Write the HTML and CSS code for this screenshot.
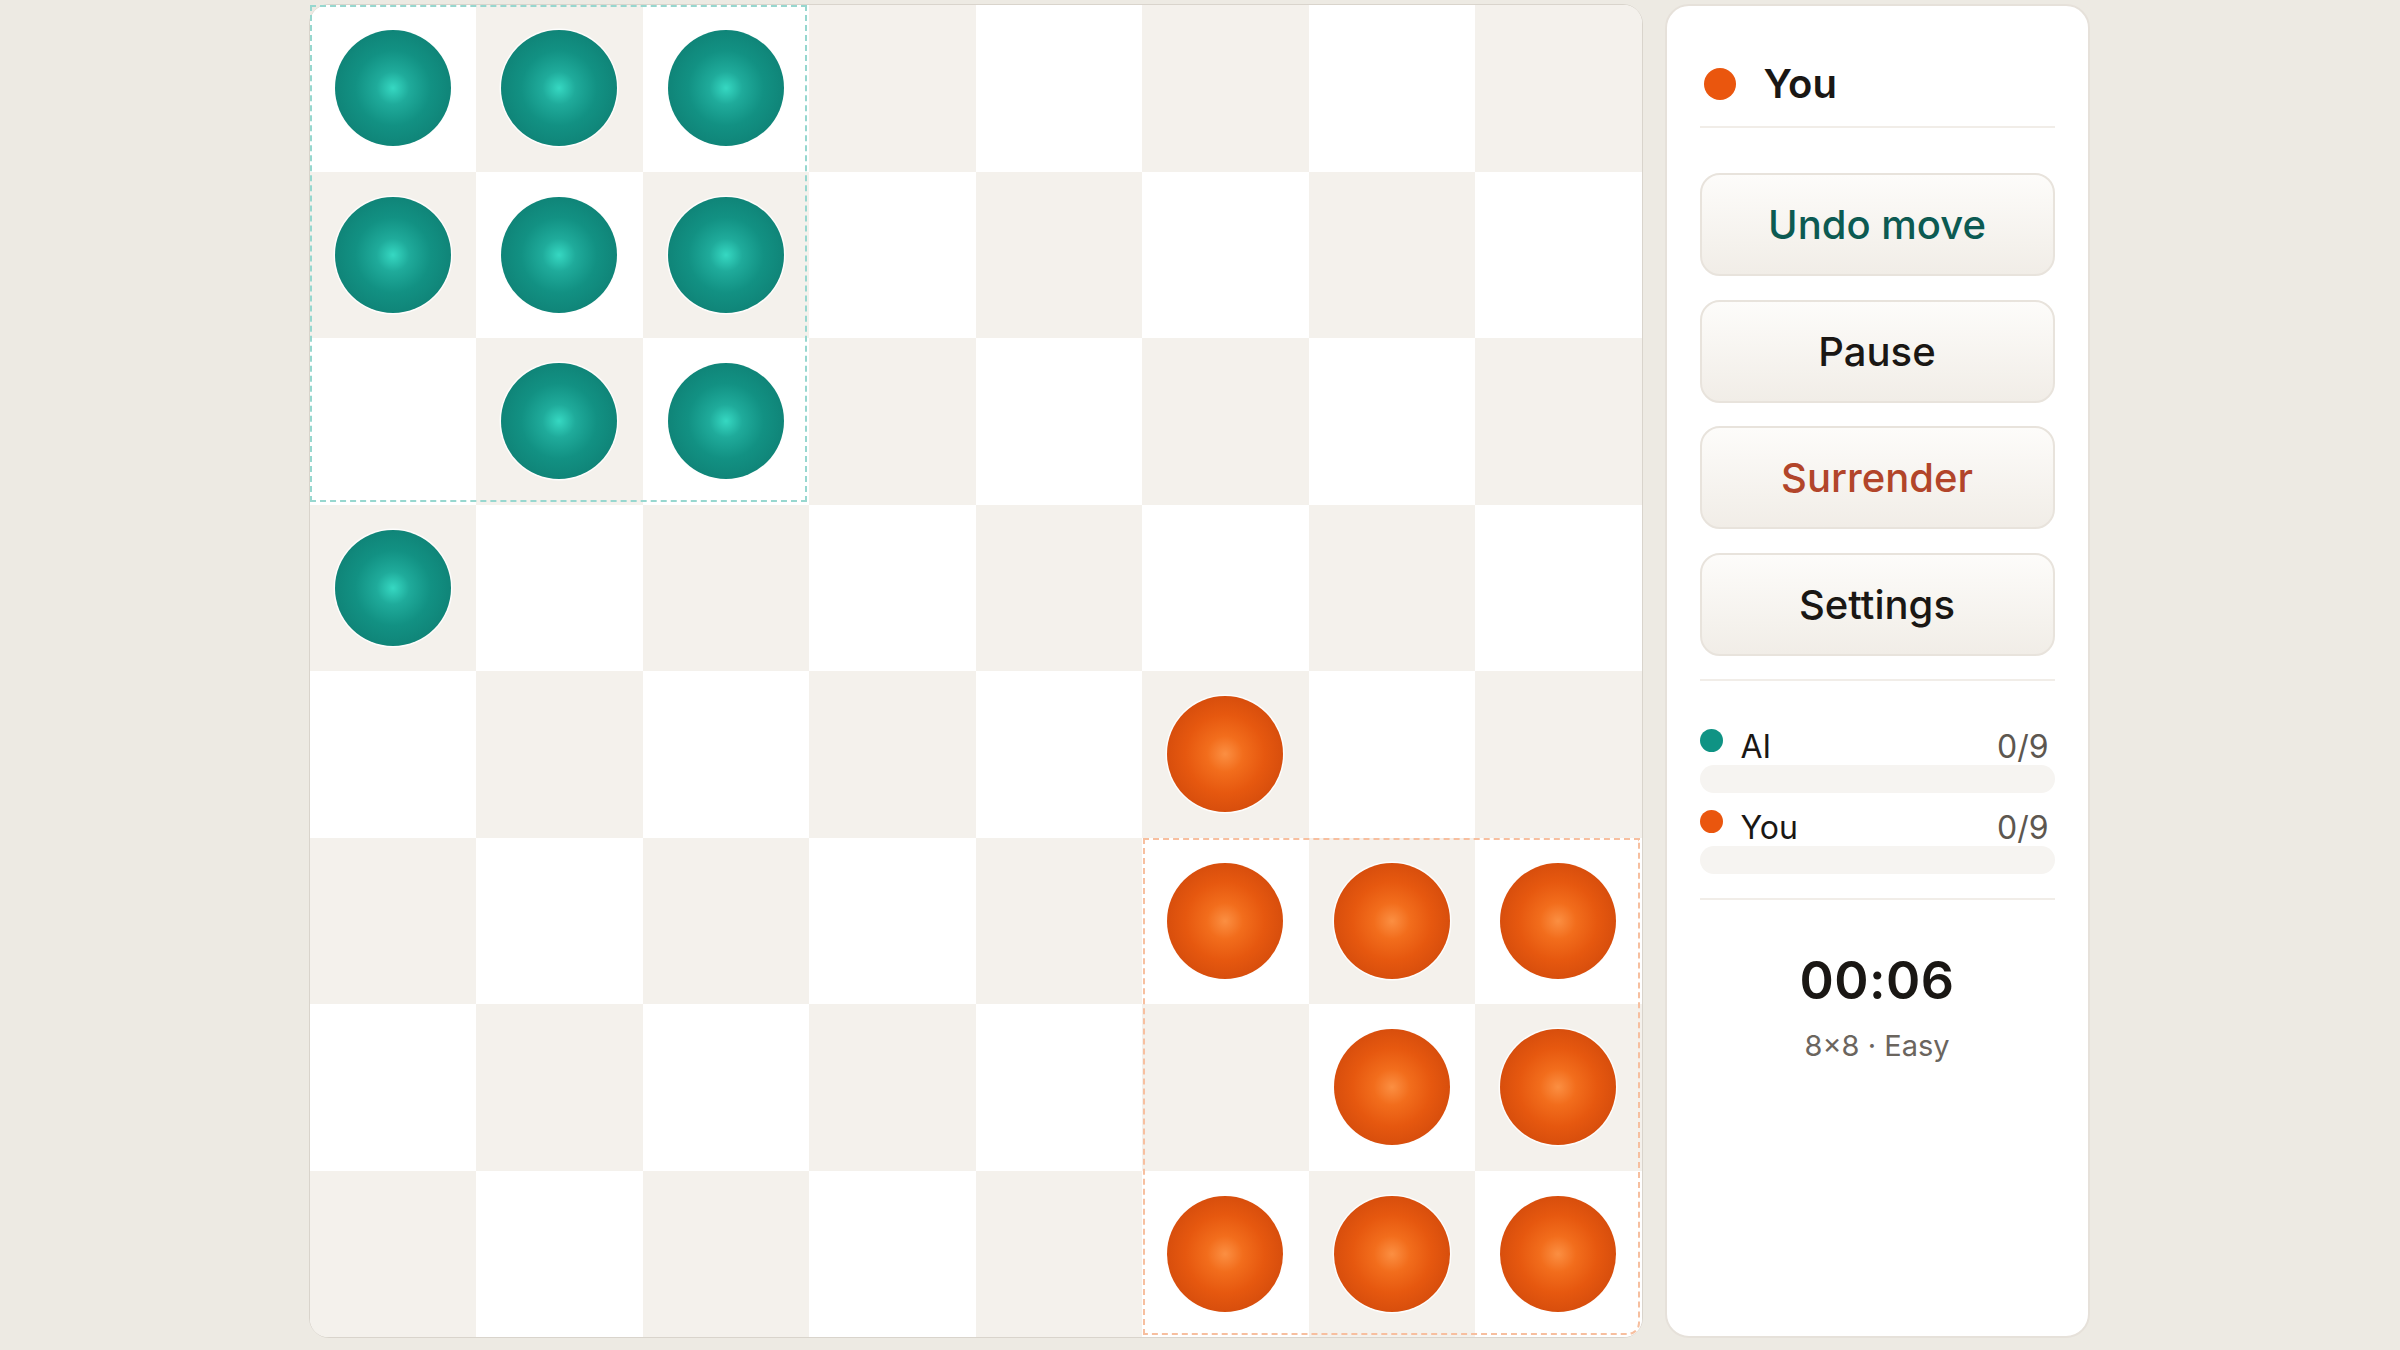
FILE: index.html
```html
<!DOCTYPE html>
<html lang="en">
<head>
    <meta charset="UTF-8">
    <meta name="viewport" content="width=device-width, initial-scale=1.0">
    <title>Halma 8×8</title>
    <link rel="stylesheet" href="styles.css">
</head>
<body>
    <div class="game">
        <!-- board -->
        <div class="board">
            <div class="grid">
                <div class="cell"><span class="piece ai"></span></div><div class="cell dark"><span class="piece ai"></span></div><div class="cell"><span class="piece ai"></span></div><div class="cell dark"></div><div class="cell"></div><div class="cell dark"></div><div class="cell"></div><div class="cell dark"></div>
                <div class="cell dark"><span class="piece ai"></span></div><div class="cell"><span class="piece ai"></span></div><div class="cell dark"><span class="piece ai"></span></div><div class="cell"></div><div class="cell dark"></div><div class="cell"></div><div class="cell dark"></div><div class="cell"></div>
                <div class="cell"></div><div class="cell dark"><span class="piece ai"></span></div><div class="cell"><span class="piece ai"></span></div><div class="cell dark"></div><div class="cell"></div><div class="cell dark"></div><div class="cell"></div><div class="cell dark"></div>
                <div class="cell dark"><span class="piece ai"></span></div><div class="cell"></div><div class="cell dark"></div><div class="cell"></div><div class="cell dark"></div><div class="cell"></div><div class="cell dark"></div><div class="cell"></div>
                <div class="cell"></div><div class="cell dark"></div><div class="cell"></div><div class="cell dark"></div><div class="cell"></div><div class="cell dark"><span class="piece you"></span></div><div class="cell"></div><div class="cell dark"></div>
                <div class="cell dark"></div><div class="cell"></div><div class="cell dark"></div><div class="cell"></div><div class="cell dark"></div><div class="cell"><span class="piece you"></span></div><div class="cell dark"><span class="piece you"></span></div><div class="cell"><span class="piece you"></span></div>
                <div class="cell"></div><div class="cell dark"></div><div class="cell"></div><div class="cell dark"></div><div class="cell"></div><div class="cell dark"></div><div class="cell"><span class="piece you"></span></div><div class="cell dark"><span class="piece you"></span></div>
                <div class="cell dark"></div><div class="cell"></div><div class="cell dark"></div><div class="cell"></div><div class="cell dark"></div><div class="cell"><span class="piece you"></span></div><div class="cell dark"><span class="piece you"></span></div><div class="cell"><span class="piece you"></span></div>
            </div>
            <!-- home camps -->
            <div class="camp camp-ai"></div>
            <div class="camp camp-you"></div>
        </div>

        <!-- side panel -->
        <div class="panel">
            <div class="turn">
                <span class="dot you"></span>
                <span class="turn-name">You</span>
            </div>

            <div class="actions">
                <button class="btn btn-undo">Undo move</button>
                <button class="btn">Pause</button>
                <button class="btn btn-danger">Surrender</button>
                <button class="btn">Settings</button>
            </div>

            <div class="scores">
                <div class="score">
                    <div class="score-head">
                        <span class="score-name"><span class="dot small ai"></span>AI</span>
                        <span class="score-value">0/9</span>
                    </div>
                    <div class="bar"><div class="bar-fill ai" style="width: 0%"></div></div>
                </div>
                <div class="score">
                    <div class="score-head">
                        <span class="score-name"><span class="dot small you"></span>You</span>
                        <span class="score-value">0/9</span>
                    </div>
                    <div class="bar"><div class="bar-fill you" style="width: 0%"></div></div>
                </div>
            </div>

            <div class="clock">
                <div class="clock-time">00:06</div>
                <div class="clock-info">8×8 · Easy</div>
            </div>
        </div>
    </div>
</body>
</html>
```

FILE: styles.css
```css
html, body {
    margin: 0;
    padding: 0;
    height: 100%;
}

body {
    background: #edeae3;
    font-family: 'Inter', 'Noto Sans', sans-serif;
    color: #1a1714;
}

.game {
    display: flex;
    justify-content: center;
    align-items: stretch;
    gap: 22px;
    padding: 4px 2px 0 0;
}

/* board */
.board {
    position: relative;
    border: 1.5px solid #d9d4cc;
    border-radius: 20px;
    background: #fff;
}

.grid {
    display: grid;
    grid-template-columns: repeat(8, 166.5px);
    grid-template-rows: repeat(8, 166.5px);
    border-radius: 18px;
    overflow: hidden;
}

.cell {
    display: flex;
    justify-content: center;
    align-items: center;
    background: #fff;
}

.cell.dark {
    background: #f4f1ec;
}

.piece {
    width: 116px;
    height: 116px;
    border-radius: 50%;
    box-shadow: 0 0 0 1.5px rgba(255, 255, 255, 0.85);
}

.piece.ai {
    background: radial-gradient(circle at 50% 50%, #36d8c2 0%, #1fab9b 20%, #129183 46%, #0f8175 78%, #0c6f65 100%);
}

.piece.you {
    background: radial-gradient(circle at 50% 50%, #fb8f42 0%, #f26d1c 22%, #e6580f 48%, #d34b0c 78%, #c0400a 100%);
}

.camp {
    position: absolute;
    width: 497px;
    height: 497px;
    box-sizing: border-box;
    border: 2px dashed;
    pointer-events: none;
}

.camp-ai {
    top: 0;
    left: 0;
    border-color: #97d7cf;
}

.camp-you {
    right: 2px;
    bottom: 2px;
    border-color: #f7bf9f;
    border-bottom-right-radius: 12px;
}

/* side panel */
.panel {
    width: 425px;
    box-sizing: border-box;
    background: #fff;
    border: 2px solid #e6e1da;
    border-radius: 24px;
    padding: 0 33px;
    display: flex;
    flex-direction: column;
}

.dot {
    display: inline-block;
    width: 32px;
    height: 32px;
    border-radius: 50%;
    flex-shrink: 0;
}

.dot.small {
    width: 23px;
    height: 23px;
}

.dot.ai {
    background: #0f9384;
}

.dot.you {
    background: #ea560e;
}

.turn {
    display: flex;
    align-items: center;
    gap: 28px;
    padding: 54px 0 18px 4px;
    border-bottom: 2px solid #f1ede8;
}

.turn-name {
    font-size: 40px;
    line-height: 48px;
    font-weight: 600;
}

.actions {
    display: flex;
    flex-direction: column;
    gap: 23.5px;
    padding: 45px 0 23px;
    border-bottom: 2px solid #f1ede8;
}

.btn {
    height: 103px;
    border: 2px solid #e8e3dc;
    border-radius: 20px;
    background: linear-gradient(#fdfcfa, #f1ede7);
    font-family: 'Inter', 'Noto Sans', sans-serif;
    font-size: 40px;
    font-weight: 500;
    color: #1a1714;
    cursor: pointer;
}

.btn-undo {
    color: #0c5a52;
}

.btn-danger {
    color: #b2452a;
}

.scores {
    display: flex;
    flex-direction: column;
    gap: 19px;
    padding: 50px 0 24px;
    border-bottom: 2px solid #f1ede8;
}

.score-head {
    display: flex;
    justify-content: space-between;
    align-items: flex-start;
    font-size: 32px;
    line-height: 32px;
}

.score-name {
    display: flex;
    align-items: flex-start;
    gap: 18px;
}

.score-name .dot {
    margin-top: -2px;
}

.score-value {
    color: #5d5750;
    padding-right: 6px;
}

.bar {
    margin-top: 2px;
    height: 28px;
    border-radius: 14px;
    background: #f6f4f1;
    overflow: hidden;
}

.bar-fill {
    height: 100%;
}

.bar-fill.ai {
    background: #0f9384;
}

.bar-fill.you {
    background: #ea560e;
}

.clock {
    text-align: center;
    padding-top: 55px;
}

.clock-time {
    font-size: 52px;
    line-height: 1;
    font-weight: 600;
    letter-spacing: 0.5px;
}

.clock-info {
    margin-top: 24px;
    font-size: 29px;
    line-height: 1;
    color: #6b655e;
}
```
